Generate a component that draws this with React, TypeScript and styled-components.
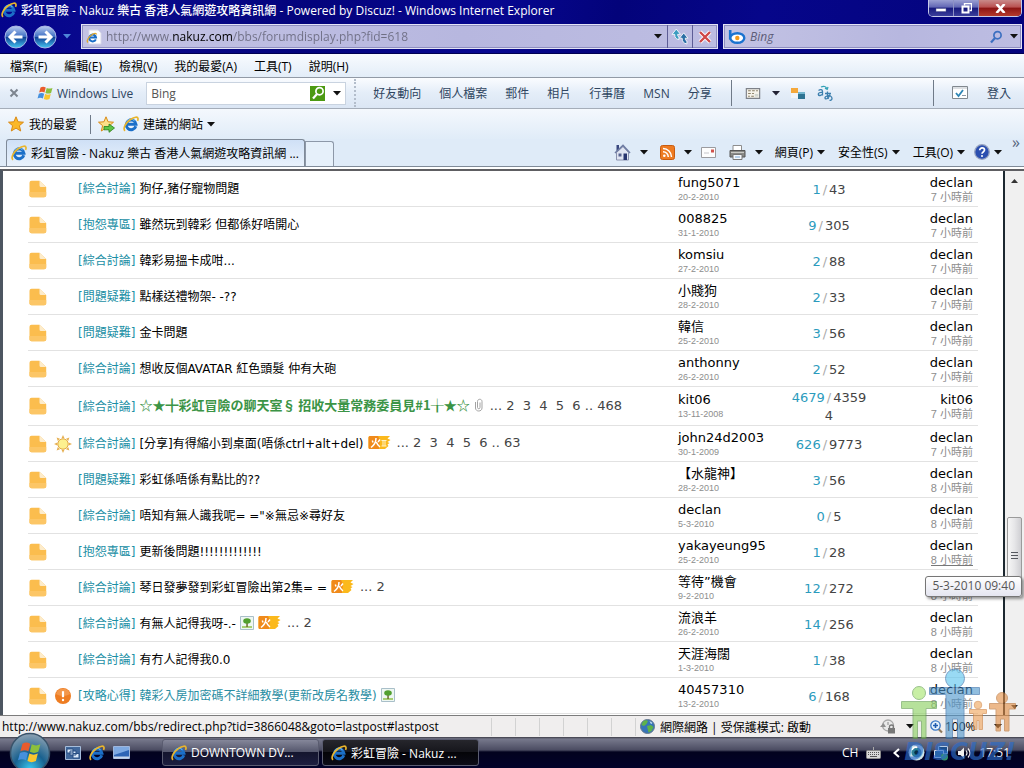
import React from 'react';
import styled, { createGlobalStyle, css } from 'styled-components';

const uiFont = `"Open Sans", "Noto Sans CJK TC", sans-serif`;
const pageFont = `"DejaVu Sans", "Noto Sans CJK TC", sans-serif`;

const GlobalStyle = createGlobalStyle`
  *, *::before, *::after { box-sizing: border-box; }
  html, body, #root { height: 100%; }
  body { margin: 0; overflow: hidden; background: #fff; font-family: ${uiFont}; font-size: 12px; }
  button, input { font: inherit; color: inherit; border: 0; background: none; padding: 0; margin: 0; }
  input:focus, button:focus { outline: none; }
  a { color: inherit; text-decoration: none; }
  svg { display: block; flex: none; }
`;

/* ---------- icons ---------- */

const IeIcon = ({ size = 16 }: { size?: number }) => (
  <svg width={size} height={size} viewBox="0 0 16 16" fill="none" aria-hidden="true">
    <path d="M12.800 10.300A4.900 4.900 0 1 1 13 8.300H4.500" stroke="#1b6fc8" strokeWidth="3" />
    <path d="M11.500 4.800A4.600 4.600 0 0 0 3.800 6" stroke="#7cc8f7" strokeWidth="1" />
    <path d="M2 14.800C-.6 12.400 3 6.600 7.500 3.500 11.500.7 14.800.6 15 2.500c.1.700-.1 1.500-.5 2.300" stroke="#e9b52c" strokeWidth="1.700" />
  </svg>
);

const PageIeIcon = () => (
  <svg width="16" height="16" viewBox="0 0 16 16" fill="none" aria-hidden="true">
    <path d="M3 1h9l3 3v11H3z" fill="#fff" stroke="#d8d8e8" />
    <path d="M9.800 10.300A3.400 3.400 0 1 1 10 8.500H3.500" stroke="#1b6fc8" strokeWidth="2" />
    <path d="M2 13.500C0 12 2.500 8 5.500 6c2.800-2 5-2 5-.5" stroke="#e0a82c" strokeWidth="1.300" />
  </svg>
);

const NavArrow = ({ flip }: { flip?: boolean }) => (
  <svg width="24" height="24" viewBox="0 0 24 24" aria-hidden="true">
    <defs>
      <linearGradient id={flip ? 'navF' : 'navB'} x1="0" y1="0" x2="0" y2="1">
        <stop offset="0" stopColor="#b9cdf0" />
        <stop offset=".48" stopColor="#3f6fc4" />
        <stop offset=".5" stopColor="#0f3d93" />
        <stop offset="1" stopColor="#45c7f2" />
      </linearGradient>
    </defs>
    <circle cx="12" cy="12" r="11" fill={`url(#${flip ? 'navF' : 'navB'})`} stroke="#a9b6e6" />
    <path
      d="M11.500 6.500L6 12l5.500 5.500M6.500 12H18.500"
      transform={flip ? 'rotate(180 12 12)' : undefined}
      fill="none"
      stroke="#fff"
      strokeWidth="3"
    />
  </svg>
);

const RefreshIcon = () => (
  <svg width="18" height="17" viewBox="0 0 16 16" aria-hidden="true" stroke="#fff" strokeWidth=".8">
    <path d="M4.500 1L.5 6H3c0 3 1.200 4.500 4 5V8.300C6 8 5.800 7.400 5.800 6h2.700z" fill="#3c9cc0" />
    <path d="M11.500 15l-4-5H10c0-1.500-.3-2.300-1.500-2.600V4.600c3 .5 4.500 2.200 4.500 5.400h2.500z" fill="#2b6fa5" transform="rotate(180 11.500 9.800)" />
  </svg>
);

const StopIcon = () => (
  <svg width="14" height="14" viewBox="0 0 14 14" aria-hidden="true" fill="none">
    <path d="M2 2l10 10M12 2L2 12" stroke="#fff" strokeWidth="4" />
    <path d="M2 2l10 10M12 2L2 12" stroke="#cf4747" strokeWidth="2.400" />
  </svg>
);

const BingIcon = () => (
  <svg width="18" height="16" viewBox="0 0 18 16" aria-hidden="true" fill="none">
    <path d="M2.200 1v9.500" stroke="#1a73d0" strokeWidth="2.600" />
    <ellipse cx="9.300" cy="9" rx="7" ry="4.800" stroke="#1a73d0" strokeWidth="2.400" fill="#fff" />
    <circle cx="9.300" cy="9" r="2.200" fill="#f29a1c" />
  </svg>
);

const SearchIcon = ({ color = '#3c6fc0' }: { color?: string }) => (
  <svg width="14" height="14" viewBox="0 0 14 14" aria-hidden="true" fill="none" stroke={color}>
    <circle cx="8.500" cy="5.200" r="3.600" strokeWidth="1.700" />
    <path d="M6 8L2 12.500" strokeWidth="2.200" />
  </svg>
);

const Caret = ({ color = '#111' }: { color?: string }) => (
  <svg width="8" height="5" viewBox="0 0 8 5" aria-hidden="true">
    <path d="M0 0h8L4 4.500z" fill={color} />
  </svg>
);

const FlagPanes = () => (
  <>
    <path d="M2.800 2.400C4.500 1.300 6 1.400 7.700 2.300L6.500 7C4.800 6.200 3.300 6.200 1.500 7.100z" fill="#ea5b2c" />
    <path d="M8.600 2.700c1.800.9 3.500.9 5.400 0L12.700 7.400c-1.900.9-3.500.9-5.300 0z" fill="#8cc03c" />
    <path d="M1.200 8.200C3 7.300 4.500 7.300 6.200 8.100L5 12.700c-1.700-.9-3.300-.9-5 0z" fill="#4690dd" />
    <path d="M7.100 8.500c1.800.9 3.400.9 5.300 0L11.200 13.200c-1.900.9-3.500.9-5.300 0z" fill="#f9c62f" />
  </>
);

const WindowsFlag = () => (
  <svg width="16" height="16" viewBox="0 0 14 15" aria-hidden="true"><FlagPanes /></svg>
);

const StarIcon = ({ add }: { add?: boolean }) => (
  <svg width="17" height="17" viewBox="0 0 17 17" aria-hidden="true">
    <path
      d="M8 .8l2.100 5 5.400.4-4.100 3.500 1.300 5.300L8 12.100 3.300 15l1.300-5.300L.5 6.200l5.400-.4z"
      fill={add ? '#fbe08a' : '#fbb829'}
      stroke="#d98a16"
    />
    {add && <path d="M6 10.500h5V8l5.500 4-5.500 4.300v-2.500H6z" fill="#5fc548" stroke="#23801a" strokeWidth=".8" />}
  </svg>
);

const PagePeelIcon = () => (
  <svg width="16" height="13" viewBox="0 0 18 14" aria-hidden="true">
    <path d="M1.500 1.500h15v11h-15z" fill="#f6f3ea" stroke="#7d8188" strokeWidth="1.300" />
    <path d="M3.500 4h3M8 4h3M12.500 4h2M3.500 7h3M8 7h2M3.500 10h2M7 10h3" stroke="#8a7f66" strokeWidth="1.200" />
    <path d="M11 7.500h4v3h-4z" fill="#d2d6cf" />
  </svg>
);

const BlocksIcon = () => (
  <svg width="15" height="13" viewBox="0 0 15 13" aria-hidden="true">
    <path d="M0 1h7v5H0z" fill="#f5a83a" />
    <path d="M0 6h7v5H0z" fill="#f2f4f7" />
    <path d="M7 6h7v6H7z" fill="#2d7392" />
    <path d="M7 5h7v2H7z" fill="#75b6cf" />
  </svg>
);

const TranslateIcon = () => (
  <svg width="16" height="16" viewBox="0 0 16 16" fill="none" stroke="#3c7fae" strokeWidth="1.300" aria-hidden="true">
    <path d="M1.500 5.500c2-1.500 4-1 4 1v4M5.500 7.500C3 7 1 8 1.300 9.500s3 1.300 4.200-.5" />
    <path d="M8 8.500h6M10.500 6.500c-.3 4 0 6 1 7.500M13 9.500c-1 4-4.500 5.500-5 3.500s5-3.500 6.500-1-1 3.500-2 3.500" />
    <path d="M4 2c3-1.500 5-.5 6 2M8 3.200l2.200 1.200L11 2" stroke="#36a3b8" />
  </svg>
);

const CheckPageIcon = () => (
  <svg width="17" height="14" viewBox="0 0 17 14" fill="none" aria-hidden="true">
    <path d="M.5.5h15v12H.5z" fill="#fff" stroke="#81888f" />
    <path d="M1 2h14" stroke="#b9c0c8" />
    <path d="M4 7l2.500 3L11 4" stroke="#2f86b5" strokeWidth="1.800" />
    <path d="M10 9.500h4" stroke="#8b99a8" />
  </svg>
);

const HomeIcon = () => (
  <svg width="17" height="17" viewBox="0 0 17 17" aria-hidden="true">
    <path d="M2.500 1h2.500v6H2.500z" fill="#39477f" />
    <path d="M2.500 8.500L9 2.500l5.500 6V16h-12z" fill="#dfe4f2" stroke="#8a92ae" />
    <path d="M1 9L9 1.500 16 9" fill="none" stroke="#6f7ca3" strokeWidth="1.600" />
    <path d="M9.500 9.500h3.500V16H9.500z" fill="#27346f" />
    <path d="M4.500 9.500h3v3h-3z" fill="#56628f" />
  </svg>
);

const FeedIcon = () => (
  <svg width="15" height="15" viewBox="0 0 15 15" aria-hidden="true" fill="none">
    <rect x=".5" y=".5" width="14" height="14" rx="2" fill="#ee7b22" stroke="#c85c10" />
    <circle cx="4.300" cy="10.800" r="1.300" fill="#fff" />
    <path d="M3 6.700a5.300 5.300 0 0 1 5.300 5.300M3 3.500A8.500 8.500 0 0 1 11.500 12" stroke="#fff" strokeWidth="1.500" />
  </svg>
);

const MailIcon = () => (
  <svg width="15" height="11" viewBox="0 0 15 11" aria-hidden="true">
    <path d="M.5.5h14v10H.5z" fill="#fdfdfd" stroke="#9b9b9f" />
    <path d="M10 2.500h3v3h-3z" fill="#d0524c" />
    <path d="M3 6h5" stroke="#c6c6cb" />
  </svg>
);

const PrintIcon = () => (
  <svg width="17" height="15" viewBox="0 0 17 15" aria-hidden="true">
    <path d="M4 .5h8.500V6H4z" fill="#fff" stroke="#8d8d8d" />
    <path d="M1 5.500h15V12H1z" fill="#8a8a86" stroke="#545454" />
    <path d="M2 7.500h13" stroke="#c9c9c5" />
    <path d="M4 9.500h9v5H4z" fill="#f5f8fb" stroke="#777" />
    <path d="M6 12h5" stroke="#7aa8d8" />
  </svg>
);

const HelpIcon = () => (
  <svg width="16" height="16" viewBox="0 0 16 16" aria-hidden="true" fill="none">
    <circle cx="8" cy="8" r="7.300" fill="#2b4fb0" stroke="#98a4c0" strokeWidth="1.300" />
    <path d="M5.700 6.300c0-3.200 4.800-3 4.800-.2C10.500 8 8 7.900 8 9.700" stroke="#fff" strokeWidth="1.700" />
    <circle cx="8" cy="12" r="1" fill="#fff" />
  </svg>
);

const FolderIcon = () => (
  <svg width="18" height="18" viewBox="0 0 18 18" aria-hidden="true">
    <path d="M2.500.8h8L17.200 7v8.200a2 2 0 0 1-2 2H2.500a2 2 0 0 1-2-2V2.800a2 2 0 0 1 2-2z" fill="#fbbd4e" />
    <path d="M.5 12h16.700v3.200a2 2 0 0 1-2 2H2.500a2 2 0 0 1-2-2z" fill="#fcc666" />
    <path d="M10.500.8l6.700 6.200h-5.200a1.500 1.500 0 0 1-1.500-1.500z" fill="#fdeccb" />
  </svg>
);

const SunIcon = () => (
  <svg width="18" height="18" viewBox="0 0 18 18" aria-hidden="true">
    <path
      d="M9 0l1.500 3.300h-3zM9 18l1.500-3.300h-3zM0 9l3.300-1.500v3zM18 9l-3.300-1.500v3zM2.600 2.600l3.400 1.200L3.800 6zM15.400 2.600L14.200 6 12 3.800zM2.600 15.400L3.800 12 6 14.200zM15.400 15.400L12 14.200 14.200 12z"
      fill="#e6b052"
    />
    <circle cx="9" cy="9" r="5.200" fill="#fdf08f" stroke="#e3a844" />
  </svg>
);

const AlertIcon = () => (
  <svg width="18" height="18" viewBox="0 0 18 18" aria-hidden="true">
    <circle cx="9" cy="9" r="8" fill="#ee7d22" />
    <path d="M2 7a7.300 7.300 0 0 1 14 0c-4 2.500-10 2.500-14 0z" fill="#f6a865" opacity=".6" />
    <path d="M9 4.200v6" stroke="#fff" strokeWidth="2.200" />
    <circle cx="9" cy="13" r="1.200" fill="#fff" />
  </svg>
);

const ClipIcon = () => (
  <svg width="10" height="14" viewBox="0 0 10 14" fill="none" stroke="#a3a3a3" aria-hidden="true">
    <path d="M1.500 4v6c0 4 6.500 4 6.500 0V3.500c0-3-4.500-3-4.500 0v6c0 1.700 2.500 1.700 2.500 0V4.500" />
  </svg>
);

const TreeIcon = () => (
  <svg width="14" height="14" viewBox="0 0 14 14" aria-hidden="true">
    <path d="M.5.5h13v13H.5z" fill="#eef7f2" stroke="#a9bfc9" />
    <path d="M2 10h10v2H2z" fill="#a6cf73" />
    <path d="M6.300 6h1.500v5H6.300z" fill="#6d6a2f" />
    <ellipse cx="7" cy="5" rx="3.800" ry="2.700" fill="#51a02f" />
  </svg>
);

const FireIcon = ({ lines }: { lines?: boolean }) => (
  <svg width="23" height="15" viewBox="0 0 23 15" aria-hidden="true" fill="none">
    <path d="M2 1h20l-2.500 2.500L22.500 5l-3 2 2 1-2 1.500 1 1.500-3.500 3H2a1.500 1.500 0 0 1-1.500-1.500v-10A1.500 1.500 0 0 1 2 1z" fill="#fbb91c" />
    <path d="M2 1h8l2 4-1 9H2a1.500 1.500 0 0 1-1.500-1.500v-10A1.500 1.500 0 0 1 2 1z" fill="#f08a1b" />
    <path d="M8 3c0 4-1.500 7-5 9.500M8.300 7c.8 2.200 1.900 3.800 3.700 5M4.300 5.500L5 7.500M12 4.500L10 7" stroke="#fff" strokeWidth="1.500" />
    {lines && <path d="M13.500 5.500h5M13.500 11h5M15 6v5M17 6v5" stroke="#fff3c8" />}
  </svg>
);

const GlobeIcon = () => (
  <svg width="15" height="15" viewBox="0 0 15 15" aria-hidden="true">
    <circle cx="7.500" cy="7.500" r="7" fill="#3674b8" stroke="#66788c" />
    <path d="M3 2.500C5 .8 7 1 8 2L6.500 5 4 7 1.500 6zM7 7l4-1 2.500 2-2 4-3 1.500z" fill="#5fb24a" />
    <path d="M9.500 2l3 2-1.500 1z" fill="#d9edf7" />
  </svg>
);

const PrivacyIcon = () => (
  <svg width="16" height="15" viewBox="0 0 16 15" aria-hidden="true" fill="none">
    <circle cx="8" cy="6.500" r="5.500" fill="#e9e9e9" stroke="#a9a9a9" strokeWidth="1.300" />
    <path d="M0 8l3.500-4L6 8z" fill="#8f8f8f" />
    <path d="M8 6V3" stroke="#888" />
    <path d="M8 9h7v5.500H8z" fill="#777" />
    <path d="M9.500 9V7.500c0-2 4-2 4 0V9" stroke="#777" strokeWidth="1.300" />
  </svg>
);

const ZoomPlusIcon = () => (
  <svg width="13" height="14" viewBox="0 0 13 14" aria-hidden="true" fill="none">
    <path d="M8 8.500l4 4" stroke="#8f7a5c" strokeWidth="2.200" />
    <circle cx="5.500" cy="5.500" r="4.700" fill="#e6f2fc" stroke="#3a77c4" strokeWidth="1.300" />
    <path d="M5.500 3v5M3 5.500h5" stroke="#1f5cb0" strokeWidth="1.600" />
  </svg>
);

const StartOrb = () => (
  <svg width="42" height="42" viewBox="0 0 42 42" aria-hidden="true">
    <defs>
      <radialGradient id="orb" cx=".5" cy=".9" r=".9">
        <stop offset="0" stopColor="#37c6ee" />
        <stop offset=".45" stopColor="#19618f" />
        <stop offset="1" stopColor="#8fa3b3" />
      </radialGradient>
    </defs>
    <circle cx="21" cy="21" r="19.500" fill="url(#orb)" stroke="#38536a" strokeWidth="1.500" />
    <g transform="translate(9 8) scale(1.600)"><FlagPanes /></g>
  </svg>
);

const SwitcherIcon = () => (
  <svg width="16" height="14" viewBox="0 0 16 14" aria-hidden="true">
    <path d="M.5.500h15v13H.5z" fill="#41689c" stroke="#a6bddb" />
    <path d="M2 3h6v4H2zM5 5h6v4H5zM8 7.500h6V12H8z" fill="#dceafa" stroke="#294f83" />
  </svg>
);

const DesktopIcon = () => (
  <svg width="17" height="13" viewBox="0 0 17 13" aria-hidden="true">
    <path d="M.5.5h16v12H.5z" fill="#2e64b5" stroke="#9fb6dc" />
    <path d="M1 1h15v3L1 9z" fill="#7ea9e2" />
    <path d="M1 10.500h15v2H1z" fill="#c8d6ea" />
  </svg>
);

const KeyboardIcon = () => (
  <svg width="15" height="12" viewBox="0 0 15 12" aria-hidden="true">
    <path d="M7.500 0v3.500" stroke="#aaa" />
    <rect x=".5" y="3.500" width="14" height="8" rx="1" fill="#d9d9d9" stroke="#8b8b8b" />
    <path d="M2 5.500h11M2 7.500h11" stroke="#555" strokeDasharray="1 1" />
    <path d="M4 9.500h7" stroke="#555" />
  </svg>
);

const TrayEyeIcon = () => (
  <svg width="17" height="17" viewBox="0 0 17 17" aria-hidden="true">
    <circle cx="8.500" cy="8.500" r="8" fill="#cfe0e6" />
    <circle cx="8.500" cy="8.500" r="5" fill="#2a7f95" />
    <circle cx="8.500" cy="8.500" r="2.200" fill="#072f45" />
    <path d="M4 6c1-2 3-3 5-2.500" stroke="#fff" fill="none" strokeWidth="1.500" />
  </svg>
);

const TrayNetIcon = () => (
  <svg width="16" height="16" viewBox="0 0 16 16" aria-hidden="true">
    <path d="M5.500 1.500h9v7h-9z" fill="#1d4f8d" stroke="#b8cce4" />
    <path d="M1.500 5.500h9v7h-9z" fill="#2a67ac" stroke="#d4e1f0" />
    <circle cx="11.500" cy="12" r="3.500" fill="#36946a" />
  </svg>
);

const SpeakerIcon = () => (
  <svg width="14" height="14" viewBox="0 0 14 14" aria-hidden="true" fill="none">
    <path d="M1 5h2.500L7 1.500v11L3.500 9H1z" fill="#f0f0f0" />
    <path d="M9 4.500q2 2.500 0 5M11 2.500q4 4.500 0 9" stroke="#f0f0f0" strokeWidth="1.200" />
  </svg>
);

const MascotFigures = () => (
  <svg width="118" height="72" viewBox="0 0 118 72" aria-hidden="true" opacity=".62">
    <g fill="#8ad05e" stroke="#5d9a48">
      <circle cx="18" cy="25" r="6.500" fill="#a7e66f" />
      <path d="M.5 33.500h35v7H25v30h-4.500V53h-4v17.500H12v-30H.5z" />
    </g>
    <g fill="#4f97cc" stroke="#2d68a6">
      <circle cx="54" cy="10.500" r="9.500" fill="#5cc4ee" />
      <path d="M28.500 19.500h50v7H63v44h-6.500V51h-5v19.500H45v-44H28.500z" />
    </g>
    <g fill="#f0a55c" stroke="#cf7e38">
      <circle cx="77" cy="37" r="3.800" />
      <path d="M68.500 41.500h17v4H81.500v16H78v-9h-2v9h-3.500v-16h-4z" />
    </g>
    <g fill="#e38f45" stroke="#b96e2e">
      <circle cx="101" cy="30" r="5.500" />
      <path d="M88.500 35.500h26v5.500H108v22h-4.500V51h-4v12H95V41h-6.500z" />
    </g>
  </svg>
);

/* ---------- window frame ---------- */

const Desktop = styled.div`
  position: relative;
  display: flex;
  flex-direction: column;
  height: 100vh;
  overflow: hidden;
`;

const Frame = styled.header`
  background: linear-gradient(100deg, #04048c 0%, #0a0a8e 12%, #04047c 30%, #070791 48%, #03037a 60%, #06068a 74%, #03037c 100%);
  border-bottom: 1px solid #000052;
`;

const TitleBar = styled.div`
  display: flex;
  align-items: flex-start;
  justify-content: space-between;
  height: 22px;
  padding-left: 1px;
`;

const Title = styled.h1`
  display: flex;
  align-items: center;
  gap: 4px;
  height: 19px;
  margin: 0;
  color: #fff;
  font-size: 12px;
  font-weight: 500;
  white-space: nowrap;
`;

const WindowButtons = styled.div`
  display: flex;
  height: 17px;
  margin-right: 2px;
  border: 1px solid #c5c9e8;
  border-top: 0;
  border-radius: 0 0 5px 5px;
  overflow: hidden;
`;

const WindowButton = styled.button<{ $close?: boolean }>`
  display: flex;
  align-items: center;
  justify-content: center;
  width: ${(p) => (p.$close ? 42 : 25)}px;
  border-right: ${(p) => (p.$close ? '0' : '1px solid #8d91c4')};
  background: ${(p) =>
    p.$close
      ? 'linear-gradient(#c98a8a, #b95050 45%, #8c1414 50%, #b53a2c)'
      : 'linear-gradient(#9a9fd2, #6166b4 45%, #16187c 50%, #3b3f9c)'};
`;

const AddressRow = styled.div`
  display: flex;
  align-items: center;
  height: 31px;
  padding: 0 2px 2px 4px;
`;

const RoundButton = styled.button`
  display: flex;
  margin-right: 5px;
`;

const IconButton = styled.button<{ $w?: number }>`
  display: flex;
  align-items: center;
  justify-content: center;
  flex: none;
  width: ${(p) => p.$w ?? 24}px;
  height: 100%;
`;

const glassField = css`
  display: flex;
  align-items: center;
  height: 25px;
  border: 1px solid #e3e3f6;
  box-shadow: inset 0 0 0 1px #8e8ec0;
  background: linear-gradient(90deg, #c3c3e4, #b7b7df 60%, #bdbde2);
`;

const UrlField = styled.label`
  ${glassField}
  flex: 1;
  margin-left: 9px;
  padding-left: 4px;
`;

const UrlInput = styled.input`
  flex: 1;
  min-width: 0;
  margin-left: 4px;
  height: 20px;
  font-size: 12px;
  color: #6f6f85;
  background: linear-gradient(90deg, #6f6f85 66px, #000 66px, #000 126px, #6f6f85 126px);
  background-clip: text;
  -webkit-text-fill-color: transparent;
`;

const FieldButton = styled(IconButton)`
  border-left: 1px solid #5d5d96;
`;

const SearchField = styled.label`
  ${glassField}
  flex: 0 0 299px;
  margin-left: 5px;
  padding-left: 4px;
`;

const SearchInput = styled.input`
  flex: 1;
  min-width: 0;
  margin-left: 4px;
  font-style: italic;
  &::placeholder { color: #5d5d78; opacity: 1; }
`;

/* ---------- tool bars ---------- */

const MenuBar = styled.nav`
  display: flex;
  align-items: center;
  gap: 17px;
  height: 24px;
  padding-left: 10px;
  background: linear-gradient(#f8fbfe, #e3edf8);
  border-bottom: 1px solid #929aa6;
`;

const BarButton = styled.button`
  display: flex;
  align-items: center;
  gap: 4px;
  white-space: nowrap;
`;

const LiveBar = styled.div`
  display: flex;
  align-items: center;
  height: 31px;
  padding: 0 13px 0 8px;
  color: #2f4560;
  background: linear-gradient(#fafcff, #e4edf8 50%, #dbe6f4);
  border-bottom: 1px solid #a5adb9;
`;

const Brand = styled(BarButton)`
  margin: 0 13px 0 17px;
`;

const LiveSearch = styled.label`
  display: flex;
  align-items: center;
  width: 200px;
  height: 23px;
  padding: 0 4px;
  background: #fff;
  border: 1px solid #c9d3e0;
`;

const LiveInput = styled.input`
  flex: 1;
  min-width: 0;
  &::placeholder { color: #555; opacity: 1; }
`;

const GreenButton = styled.button`
  display: flex;
  align-items: center;
  justify-content: center;
  width: 15px;
  height: 15px;
  margin-right: 8px;
  background: #4c9a12;
`;

const LiveLinks = styled.nav`
  display: flex;
  align-items: center;
  gap: 18px;
  height: 28px;
  margin-left: 8px;
  padding-left: 17px;
  border-left: 2px dotted #b3bdcb;
  white-space: nowrap;
`;

const Divider = styled.span<{ $h?: number; $before?: number; $after?: number }>`
  width: 1px;
  height: ${(p) => p.$h ?? 26}px;
  margin: 0 ${(p) => p.$after ?? 0}px 0 ${(p) => p.$before ?? 0}px;
  background: #6f7a88;
`;

const LiveTools = styled.div`
  display: flex;
  align-items: center;
  gap: 11px;
`;

const LiveAccount = styled.div`
  display: flex;
  align-items: center;
  gap: 18px;
  margin-left: auto;
`;

const FavoritesBar = styled.div`
  display: flex;
  align-items: center;
  height: 30px;
  padding-left: 8px;
  background: linear-gradient(#f4f8fd, #e0ecf8);
`;

const SuggestedButton = styled(BarButton)`
  margin-left: 8px;
`;

const TabRow = styled.div`
  display: flex;
  align-items: flex-end;
  height: 28px;
  padding-left: 6px;
  background: #dfebf8;
  border-bottom: 1px solid #7f8a98;
`;

const Tab = styled.button`
  display: flex;
  align-items: center;
  gap: 4px;
  width: 299px;
  height: 27px;
  padding: 0 4px;
  white-space: nowrap;
  background: linear-gradient(#cfe0f6, #e9f2fc);
  border: 1px solid #7f8a98;
  border-bottom: 0;
  border-radius: 3px 3px 0 0;
`;

const NewTab = styled.button`
  width: 29px;
  height: 25px;
  border: 1px solid #8d98a8;
  border-bottom: 0;
  border-radius: 0 3px 0 0;
  background: #e6f0fa;
`;

const CommandBar = styled.div`
  display: flex;
  align-items: center;
  height: 28px;
  margin-left: auto;
  padding-right: 4px;
`;

const CommandGroup = styled.div<{ $after: number }>`
  display: flex;
  align-items: center;
  gap: 9px;
  margin-right: ${(p) => p.$after}px;
`;

const More = styled.button`
  align-self: flex-start;
  margin-left: 10px;
  color: #56657c;
  font-size: 16px;
  line-height: 8px;
`;

/* ---------- forum page ---------- */

const Viewport = styled.main`
  position: relative;
  display: flex;
  flex: 1;
  min-height: 0;
  overflow: hidden;
  border-top: 2px solid #5e5e62;
  border-left: 3px solid #4d5661;
  margin-top: 2px;
  background: #fff;
`;

const Page = styled.div`
  flex: 1;
  min-width: 0;
  padding: 0 25px;
  border-right: 2px solid #1c2830;
  font-family: ${pageFont};
`;

const ThreadTable = styled.table`
  width: 100%;
  border-collapse: separate;
  border-spacing: 0;
  table-layout: fixed;
  font-size: 12px;
`;

const Cell = styled.td<{ $w?: number; $align?: string }>`
  width: ${(p) => (p.$w ? `${p.$w}px` : 'auto')};
  height: 36px;
  padding: 2px 0 0;
  border-bottom: 1px solid #e2e2e2;
  text-align: ${(p) => p.$align ?? 'left'};
  vertical-align: middle;
  white-space: nowrap;
`;

const IconCell = styled(Cell)`
  padding: 0 0 0 1px;
`;

const SubjectCell = styled(Cell)`
  padding: 0 0 2px;
`;

const LastCell = styled(Cell)`
  position: relative;
  padding-right: 5px;
`;

const Subject = styled.div`
  display: flex;
  align-items: center;
  gap: 4px;
  height: 20px;
`;

const Category = styled.a`
  color: #1b8fa5;
`;

const ThreadLink = styled.a<{ $tone?: 'green' | 'teal' }>`
  color: ${(p) => (p.$tone === 'teal' ? '#2a8ea3' : '#000')};
  ${(p) =>
    p.$tone === 'green' &&
    css`
      color: #3b9446;
      font: 700 13px/20px "Noto Sans CJK TC", sans-serif;
    `}
`;

const Pager = styled.span`
  display: flex;
  margin-left: 2px;
  color: #444;
  font-size: 13px;
  white-space: pre;
`;

const Name = styled.a`
  display: block;
  height: 16px;
  color: #000;
  font-size: 13px;
  line-height: 16px;
`;

const Stamp = styled.span<{ $cjk?: boolean; $hover?: boolean }>`
  display: inline-block;
  height: 12px;
  font-family: "Liberation Sans", "Noto Sans CJK TC", sans-serif;
  font-size: ${(p) => (p.$cjk ? 11 : 9)}px;
  line-height: 12px;
  color: #8d8d8d;
  vertical-align: top;
  border-bottom: ${(p) => (p.$hover ? '1px solid #777' : '0')};
`;

const Counts = styled.div`
  color: #aaa;
  font-size: 13px;
  line-height: 18px;
  white-space: normal;
  word-break: break-all;
`;

const Replies = styled.span`
  padding-right: 2px;
  color: #2b9bbd;
`;

const Views = styled.span`
  padding-left: 2px;
  color: #444;
`;

const Tooltip = styled.div`
  position: absolute;
  top: 42px;
  right: -44px;
  z-index: 3;
  height: 21px;
  padding: 0 6px;
  border: 1px solid #767676;
  border-radius: 3px;
  background: linear-gradient(#fff, #e4e5f0);
  box-shadow: 2px 2px 3px rgba(0, 0, 0, 0.4);
  color: #575757;
  font-family: ${uiFont};
  font-size: 12px;
  line-height: 18px;
`;

const ScrollTrack = styled.div`
  display: flex;
  flex-direction: column;
  flex: none;
  width: 19px;
  padding: 8px 2px 6px;
  align-items: center;
  background: #f0f0f0;
`;

const ScrollThumb = styled.div`
  display: flex;
  flex-direction: column;
  align-items: center;
  justify-content: center;
  gap: 2px;
  width: 15px;
  height: 77px;
  margin: auto 0 111px;
  border: 1px solid #9b9b9b;
  border-radius: 2px;
  background: linear-gradient(90deg, #f6f6f6, #e6e6e8 50%, #cfcfd3);
`;

const Grip = styled.span`
  width: 7px;
  height: 1px;
  background: #55585f;
`;

/* ---------- status and task bars ---------- */

const StatusBar = styled.footer`
  display: flex;
  align-items: center;
  flex: none;
  height: 22px;
  padding: 0 4px 0 2px;
  background: #f0eeee;
  border-top: 1px solid #7c7c7c;
`;

const StatusUrl = styled.span`
  flex: 1;
  min-width: 0;
  white-space: nowrap;
`;

const StatusPanes = styled.div`
  display: flex;
  height: 18px;
  border-left: 1px solid #d2d2d2;
`;

const Pane = styled.span`
  width: 24px;
  border-right: 1px solid #d2d2d2;
`;

const Zone = styled.div`
  display: flex;
  align-items: center;
  gap: 5px;
  width: 240px;
  padding-left: 4px;
  white-space: nowrap;
`;

const StatusTools = styled.div`
  display: flex;
  align-items: center;
  width: 144px;
`;

const ZoomButton = styled(BarButton)`
  gap: 2px;
  margin: 0 18px 0 10px;
`;

const TaskBar = styled.div`
  display: flex;
  align-items: center;
  flex: none;
  height: 31px;
  padding: 0 14px 0 9px;
  color: #fff;
  background: linear-gradient(#3c3c46 0, #77798c 2px, #4b4c62 13px, #02021e 15px, #02022a);
`;

const StartButton = styled.button`
  display: flex;
  align-items: center;
  height: 31px;
  margin-right: 14px;
`;

const QuickLaunch = styled.div`
  display: flex;
  align-items: center;
  gap: 8px;
  width: 97px;
`;

const TaskButton = styled.button<{ $active?: boolean }>`
  display: flex;
  align-items: center;
  gap: 4px;
  width: 157px;
  height: 27px;
  margin-right: 3px;
  padding: 0 8px;
  border: 1px solid #5a5c70;
  border-radius: 3px;
  white-space: nowrap;
  background: ${(p) =>
    p.$active ? 'linear-gradient(#26262c, #16161c 48%, #040408 50%, #0c0c18)' : 'linear-gradient(#85879a, #54566c 48%, #14152e 50%, #1d1e40)'};
`;

const Tray = styled.div`
  display: flex;
  align-items: center;
  gap: 8px;
  margin-left: auto;
`;

const TrayArrow = styled.svg`
  margin-left: 4px;
`;

const Watermark = styled.div`
  position: absolute;
  right: 5px;
  bottom: 4px;
  z-index: 5;
  display: flex;
  flex-direction: column;
  pointer-events: none;
`;

const WatermarkWord = styled.span`
  color: rgba(44, 108, 200, 0.66);
  font: italic 700 24px/24px "DejaVu Sans", sans-serif;
  text-align: center;
`;

/* ---------- data ---------- */

type Thread = {
  cat: string;
  title: string;
  author: string;
  date: string;
  replies: string;
  views: string;
  last?: string;
  hours: number;
  tone?: 'green' | 'teal';
  badge?: 'sun' | 'alert';
  marks?: Array<'clip' | 'fire' | 'fire3' | 'tree'>;
  pages?: string;
  tip?: string;
};

const threads: Thread[] = [
  { cat: '綜合討論', title: '狗仔,豬仔寵物問題', author: 'fung5071', date: '20-2-2010', replies: '1', views: '43', hours: 7 },
  { cat: '抱怨專區', title: '雖然玩到韓彩 但都係好唔開心', author: '008825', date: '31-1-2010', replies: '9', views: '305', hours: 7 },
  { cat: '綜合討論', title: '韓彩易搵卡成咁...', author: 'komsiu', date: '27-2-2010', replies: '2', views: '88', hours: 7 },
  { cat: '問題疑難', title: '點樣送禮物架- -??', author: '小賤狗', date: '28-2-2010', replies: '2', views: '33', hours: 7 },
  { cat: '問題疑難', title: '金卡問題', author: '韓信', date: '25-2-2010', replies: '3', views: '56', hours: 7 },
  { cat: '綜合討論', title: '想收反個AVATAR 紅色頭髮 仲有大砲', author: 'anthonny', date: '26-2-2010', replies: '2', views: '52', hours: 7 },
  { cat: '綜合討論', title: '☆★╋彩虹冒險の聊天室§ 招收大量常務委員見#1╁★☆', author: 'kit06', date: '13-11-2008', replies: '4679', views: '43594', last: 'kit06', hours: 7, tone: 'green', marks: ['clip'], pages: '... 2  3  4  5  6 .. 468' },
  { cat: '綜合討論', title: '[分享]有得縮小到桌面(唔係ctrl+alt+del)', author: 'john24d2003', date: '30-1-2009', replies: '626', views: '9773', hours: 7, badge: 'sun', marks: ['fire3'], pages: '... 2  3  4  5  6 .. 63' },
  { cat: '問題疑難', title: '彩虹係唔係有點比的??', author: '【水龍神】', date: '28-2-2010', replies: '3', views: '56', hours: 8 },
  { cat: '綜合討論', title: '唔知有無人識我呢= ="※無忌※尋好友', author: 'declan', date: '5-3-2010', replies: '0', views: '5', hours: 8 },
  { cat: '抱怨專區', title: '更新後問題!!!!!!!!!!!!!', author: 'yakayeung95', date: '25-2-2010', replies: '1', views: '28', hours: 8, tip: '5-3-2010 09:40' },
  { cat: '綜合討論', title: '琴日發夢發到彩虹冒險出第2集= =', author: '等待”機會', date: '9-2-2010', replies: '12', views: '272', hours: 8, marks: ['fire'], pages: '... 2' },
  { cat: '綜合討論', title: '有無人記得我呀-.-', author: '流浪羊', date: '26-2-2010', replies: '14', views: '256', hours: 8, marks: ['tree', 'fire'], pages: '... 2' },
  { cat: '綜合討論', title: '有冇人記得我0.0', author: '天涯海闊', date: '1-3-2010', replies: '1', views: '38', hours: 8 },
  { cat: '攻略心得', title: '韓彩入房加密碼不詳細教學(更新改房名教學)', author: '40457310', date: '13-2-2010', replies: '6', views: '168', hours: 8, tone: 'teal', badge: 'alert', marks: ['tree'] },
];

const markIcons = {
  clip: <ClipIcon />,
  fire: <FireIcon />,
  fire3: <FireIcon lines />,
  tree: <TreeIcon />,
};

const ThreadRow = ({ t }: { t: Thread }) => (
  <tr>
    <IconCell $w={25}><FolderIcon /></IconCell>
    <IconCell $w={25}>
      {t.badge === 'sun' && <SunIcon />}
      {t.badge === 'alert' && <AlertIcon />}
    </IconCell>
    <SubjectCell>
      <Subject>
        <Category href="#">[{t.cat}]</Category>
        <ThreadLink href="#" $tone={t.tone}>{t.title}</ThreadLink>
        {t.marks?.map((m) => <React.Fragment key={m}>{markIcons[m]}</React.Fragment>)}
        {t.pages && <Pager>{t.pages}</Pager>}
      </Subject>
    </SubjectCell>
    <Cell $w={112}>
      <Name href="#">{t.author}</Name>
      <Stamp>{t.date}</Stamp>
    </Cell>
    <Cell $w={78} $align="center">
      <Counts>
        <Replies>{t.replies}</Replies>/<Views>{t.views}</Views>
      </Counts>
    </Cell>
    <LastCell $w={110} $align="right">
      <Name href="#">{t.last ?? 'declan'}</Name>
      <Stamp $cjk $hover={!!t.tip}>{t.hours} 小時前</Stamp>
      {t.tip && <Tooltip role="tooltip">{t.tip}</Tooltip>}
    </LastCell>
  </tr>
);

const menus = ['檔案(F)', '編輯(E)', '檢視(V)', '我的最愛(A)', '工具(T)', '說明(H)'];
const liveLinks = ['好友動向', '個人檔案', '郵件', '相片', '行事曆', 'MSN', '分享'];

export default function App() {
  return (
    <Desktop>
      <GlobalStyle />
      <Frame>
        <TitleBar>
          <Title>
            <IeIcon />
            彩虹冒險 - Nakuz 樂古 香港人氣網遊攻略資訊網 - Powered by Discuz! - Windows Internet Explorer
          </Title>
          <WindowButtons>
            <WindowButton aria-label="最小化">
              <svg width="12" height="10" viewBox="0 0 12 10"><path d="M1 5.500h10v3H1z" fill="#fff" stroke="#55588c" strokeWidth=".5" /></svg>
            </WindowButton>
            <WindowButton aria-label="還原">
              <svg width="11" height="11" viewBox="0 0 11 11" fill="none" stroke="#fff"><path d="M3.500 2.500v-2h7v7h-2" strokeWidth="1.400" /><path d="M1.500 3.500h6v6h-6z" strokeWidth="2" /></svg>
            </WindowButton>
            <WindowButton aria-label="關閉" $close>
              <svg width="11" height="9" viewBox="0 0 11 9"><path d="M1.500 0L9.500 9M9.500 0L1.500 9" stroke="#fff" strokeWidth="2.600" /></svg>
            </WindowButton>
          </WindowButtons>
        </TitleBar>
        <AddressRow>
          <RoundButton aria-label="上一頁"><NavArrow /></RoundButton>
          <RoundButton aria-label="下一頁"><NavArrow flip /></RoundButton>
          <IconButton $w={10} aria-label="最近的網頁"><Caret color="#4f86d8" /></IconButton>
          <UrlField>
            <PageIeIcon />
            <UrlInput aria-label="網址" defaultValue="http://www.nakuz.com/bbs/forumdisplay.php?fid=618" />
            <IconButton $w={18} aria-label="網址清單"><Caret /></IconButton>
            <FieldButton $w={25} aria-label="重新整理"><RefreshIcon /></FieldButton>
            <FieldButton $w={25} aria-label="停止"><StopIcon /></FieldButton>
          </UrlField>
          <SearchField>
            <BingIcon />
            <SearchInput aria-label="搜尋" placeholder="Bing" />
            <IconButton $w={22} aria-label="執行搜尋"><SearchIcon /></IconButton>
            <IconButton $w={14} aria-label="搜尋選項"><Caret /></IconButton>
          </SearchField>
        </AddressRow>
      </Frame>

      <MenuBar>
        {menus.map((m) => <BarButton key={m}>{m}</BarButton>)}
      </MenuBar>

      <LiveBar>
        <BarButton aria-label="關閉工具列">
          <svg width="12" height="12" viewBox="0 0 12 12"><path d="M2.500 2.500l7 7M9.500 2.500l-7 7" stroke="#7d858f" strokeWidth="2" /></svg>
        </BarButton>
        <Brand><WindowsFlag />Windows Live</Brand>
        <LiveSearch>
          <LiveInput aria-label="Bing 搜尋" placeholder="Bing" />
          <GreenButton aria-label="搜尋"><SearchIcon color="#fff" /></GreenButton>
          <Caret />
        </LiveSearch>
        <LiveLinks>
          {liveLinks.map((l) => <a key={l} href="#">{l}</a>)}
        </LiveLinks>
        <Divider $before={19} $after={13} />
        <LiveTools>
          <PagePeelIcon />
          <Caret color="#223" />
          <BlocksIcon />
          <TranslateIcon />
        </LiveTools>
        <LiveAccount>
          <Divider />
          <CheckPageIcon />
          <BarButton>登入</BarButton>
        </LiveAccount>
      </LiveBar>

      <FavoritesBar>
        <BarButton><StarIcon />我的最愛</BarButton>
        <Divider $h={19} $before={13} $after={7} />
        <BarButton aria-label="加到我的最愛列"><StarIcon add /></BarButton>
        <SuggestedButton><IeIcon />建議的網站<Caret /></SuggestedButton>
      </FavoritesBar>

      <TabRow>
        <Tab><IeIcon />彩虹冒險 - Nakuz 樂古 香港人氣網遊攻略資訊網 ...</Tab>
        <NewTab aria-label="新索引標籤" />
        <CommandBar>
          <CommandGroup $after={12}><HomeIcon /><Caret /></CommandGroup>
          <CommandGroup $after={9}><FeedIcon /><Caret /></CommandGroup>
          <CommandGroup $after={13}><MailIcon /></CommandGroup>
          <CommandGroup $after={12}><PrintIcon /><Caret /></CommandGroup>
          <CommandGroup $after={13}><BarButton>網頁(P)<Caret /></BarButton></CommandGroup>
          <CommandGroup $after={13}><BarButton>安全性(S)<Caret /></BarButton></CommandGroup>
          <CommandGroup $after={9}><BarButton>工具(O)<Caret /></BarButton></CommandGroup>
          <BarButton aria-label="說明"><HelpIcon /><Caret /></BarButton>
          <More>»</More>
        </CommandBar>
      </TabRow>

      <Viewport>
        <Page>
          <ThreadTable>
            <tbody>
              {threads.map((t, i) => <ThreadRow key={i} t={t} />)}
            </tbody>
          </ThreadTable>
        </Page>
        <ScrollTrack>
          <svg width="7" height="4" viewBox="0 0 7 4"><path d="M0 4h7L3.500 0z" fill="#333" /></svg>
          <ScrollThumb><Grip /><Grip /><Grip /></ScrollThumb>
          <svg width="7" height="4" viewBox="0 0 7 4"><path d="M0 0h7L3.500 4z" fill="#333" /></svg>
        </ScrollTrack>
      </Viewport>

      <StatusBar>
        <StatusUrl>http://www.nakuz.com/bbs/redirect.php?tid=3866048&amp;goto=lastpost#lastpost</StatusUrl>
        <StatusPanes>
          <Pane /><Pane /><Pane /><Pane /><Pane /><Pane />
        </StatusPanes>
        <Zone><GlobeIcon />網際網路 | 受保護模式: 啟動</Zone>
        <StatusTools>
          <IconButton $w={24} aria-label="隱私權"><PrivacyIcon /></IconButton>
          <IconButton $w={20} aria-label="隱私權選項"><Caret /></IconButton>
          <ZoomButton><ZoomPlusIcon />100%</ZoomButton>
          <Caret />
        </StatusTools>
      </StatusBar>

      <TaskBar>
        <StartButton aria-label="開始"><StartOrb /></StartButton>
        <QuickLaunch><SwitcherIcon /><IeIcon /><DesktopIcon /></QuickLaunch>
        <TaskButton><IeIcon />DOWNTOWN DV...</TaskButton>
        <TaskButton $active><IeIcon />彩虹冒險 - Nakuz ...</TaskButton>
        <Tray>
          <span>CH</span>
          <KeyboardIcon />
          <TrayArrow width="7" height="10" viewBox="0 0 7 10"><path d="M6 1L1.500 5 6 9" fill="none" stroke="#fff" strokeWidth="2" /></TrayArrow>
          <TrayEyeIcon />
          <TrayNetIcon />
          <SpeakerIcon />
          <time>17:51</time>
        </Tray>
      </TaskBar>

      <Watermark>
        <MascotFigures />
        <WatermarkWord>DISCUZ!</WatermarkWord>
      </Watermark>
    </Desktop>
  );
}
